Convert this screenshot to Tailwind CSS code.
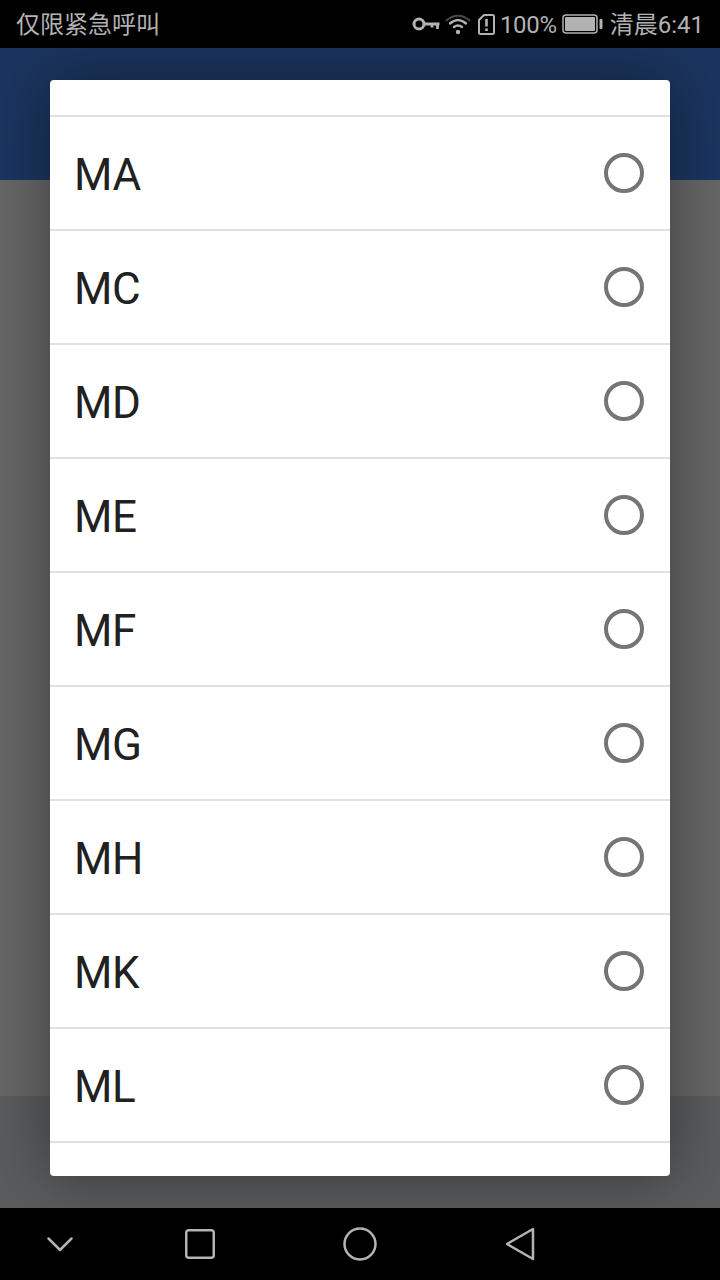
<!DOCTYPE html>
<html lang="zh">
<head>
  <meta charset="UTF-8">
  <title>Country code</title>
  <script src="https://cdn.jsdelivr.net/npm/@tailwindcss/browser@4"></script>
</head>
<body class="bg-black font-['Roboto','Noto_Sans_CJK_SC',sans-serif]">
  <div class="relative w-[720px] h-[1280px] flex flex-col overflow-hidden">

    <!-- status bar -->
    <div class="h-12 bg-black flex items-center justify-between pl-4 pr-4 text-2xl text-[#b4b4b4]">
      <span class="pt-[2px]">仅限紧急呼叫</span>
      <div class="flex items-center">
        <svg width="28" height="14" viewBox="0 0 28 14" fill="none" stroke="#b4b4b4" class="mr-[5px]">
          <circle cx="7" cy="7" r="5" stroke-width="3"/>
          <path d="M12 7H27.500M25.500 7V12M20 7V10.500" stroke-width="2.800"/>
        </svg>
        <svg width="26" height="22" viewBox="0 0 26 22" fill="none" stroke-linecap="round" class="mr-[7px]">
          <path d="M1.500 7.500C8 1 18 1 24.500 7.500" stroke="#4a4a4a" stroke-width="2"/>
          <path d="M5 10.500C10 6 16 6 21 10.500" stroke="#b4b4b4" stroke-width="2.400"/>
          <path d="M9 14C11.500 12 14.500 12 17 14" stroke="#b4b4b4" stroke-width="2.400"/>
          <circle cx="13" cy="19" r="2.200" fill="#b4b4b4"/>
        </svg>
        <svg width="17" height="21" viewBox="0 0 17 21" fill="none" stroke="#b4b4b4" class="mr-[5px]">
          <path d="M6 1H14.500C15.300 1 16 1.700 16 2.500V18.500C16 19.300 15.300 20 14.500 20H2.500C1.700 20 1 19.300 1 18.500V6Z" stroke-width="2"/>
          <path d="M8.500 5V12.500M8.500 14.500V17" stroke-width="2.600"/>
        </svg>
        <span class="pt-[2px] mr-[5px] tracking-[-0.3px]">100%</span>
        <svg width="41" height="20" viewBox="0 0 41 20" fill="none" class="mr-[7px]">
          <rect x="1" y="1" width="34" height="18" rx="3" stroke="#b4b4b4" stroke-width="1.500"/>
          <rect x="3" y="3" width="30" height="14" rx="1" fill="#b4b4b4"/>
          <rect x="37.500" y="5" width="3" height="10" rx="1" fill="#b4b4b4"/>
        </svg>
        <span class="pt-[2px]">清晨6:41</span>
      </div>
    </div>

    <!-- page behind the dialog -->
    <div class="h-[132px] bg-[#1b355f]"></div>
    <div class="flex-1 bg-[#666666]"></div>
    <div class="h-28 bg-[#5a5b5c]"></div>

    <!-- nav bar -->
    <div class="h-18 bg-black grid grid-cols-[120px_160px_160px_160px] items-center justify-items-center">
      <svg width="28" height="18" viewBox="0 0 28 18" fill="none" stroke="#b4b4b4" stroke-width="2.500" stroke-linecap="round" stroke-linejoin="round">
        <path d="M2.500 3.500L14 15L25.500 3.500"/>
      </svg>
      <svg width="30" height="30" viewBox="0 0 30 30" fill="none" stroke="#b4b4b4" stroke-width="2.500">
        <rect x="1.250" y="1.250" width="27.500" height="27.500" rx="2.500"/>
      </svg>
      <svg width="34" height="34" viewBox="0 0 34 34" fill="none" stroke="#b4b4b4" stroke-width="2.500">
        <circle cx="17" cy="17" r="15.500"/>
      </svg>
      <svg width="30" height="34" viewBox="0 0 30 34" fill="none" stroke="#b4b4b4" stroke-width="2.500" stroke-linejoin="round">
        <path d="M2 17L28 2V32Z"/>
      </svg>
    </div>

    <!-- dialog -->
    <div class="absolute left-[50px] top-20 w-[620px] h-[1096px] bg-white rounded overflow-hidden shadow-[0_0_60px_rgba(0,0,0,0.4)]">
      <div class="h-[37px] border-b-2 border-[#e0e0e0]"></div>
      <div class="h-[114px] border-b-2 border-[#e0e0e0] flex items-center justify-between pl-6 pr-[26px] text-[44px] tracking-[-0.4px] text-[#212121]"><span class="pt-1">MA</span><span class="w-10 h-10 rounded-full border-4 border-[#757575]"></span></div>
      <div class="h-[114px] border-b-2 border-[#e0e0e0] flex items-center justify-between pl-6 pr-[26px] text-[44px] tracking-[-0.4px] text-[#212121]"><span class="pt-1">MC</span><span class="w-10 h-10 rounded-full border-4 border-[#757575]"></span></div>
      <div class="h-[114px] border-b-2 border-[#e0e0e0] flex items-center justify-between pl-6 pr-[26px] text-[44px] tracking-[-0.4px] text-[#212121]"><span class="pt-1">MD</span><span class="w-10 h-10 rounded-full border-4 border-[#757575]"></span></div>
      <div class="h-[114px] border-b-2 border-[#e0e0e0] flex items-center justify-between pl-6 pr-[26px] text-[44px] tracking-[-0.4px] text-[#212121]"><span class="pt-1">ME</span><span class="w-10 h-10 rounded-full border-4 border-[#757575]"></span></div>
      <div class="h-[114px] border-b-2 border-[#e0e0e0] flex items-center justify-between pl-6 pr-[26px] text-[44px] tracking-[-0.4px] text-[#212121]"><span class="pt-1">MF</span><span class="w-10 h-10 rounded-full border-4 border-[#757575]"></span></div>
      <div class="h-[114px] border-b-2 border-[#e0e0e0] flex items-center justify-between pl-6 pr-[26px] text-[44px] tracking-[-0.4px] text-[#212121]"><span class="pt-1">MG</span><span class="w-10 h-10 rounded-full border-4 border-[#757575]"></span></div>
      <div class="h-[114px] border-b-2 border-[#e0e0e0] flex items-center justify-between pl-6 pr-[26px] text-[44px] tracking-[-0.4px] text-[#212121]"><span class="pt-1">MH</span><span class="w-10 h-10 rounded-full border-4 border-[#757575]"></span></div>
      <div class="h-[114px] border-b-2 border-[#e0e0e0] flex items-center justify-between pl-6 pr-[26px] text-[44px] tracking-[-0.4px] text-[#212121]"><span class="pt-1">MK</span><span class="w-10 h-10 rounded-full border-4 border-[#757575]"></span></div>
      <div class="h-[114px] border-b-2 border-[#e0e0e0] flex items-center justify-between pl-6 pr-[26px] text-[44px] tracking-[-0.4px] text-[#212121]"><span class="pt-1">ML</span><span class="w-10 h-10 rounded-full border-4 border-[#757575]"></span></div>
    </div>
  </div>
</body>
</html>
